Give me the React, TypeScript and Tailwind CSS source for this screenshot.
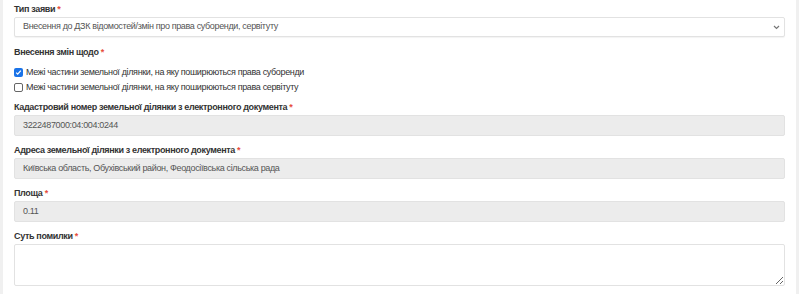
const font = { fontFamily: '"Liberation Sans", Arial, sans-serif' }

function Label({ text }: { text: string }) {
  return (
    <div className="h-[12px] text-[9px] font-bold leading-[12px] text-[#333]">
      {text} <span className="text-[#e74c3c]">*</span>
    </div>
  )
}

function ReadOnly({ value }: { value: string }) {
  return (
    <div className="mt-[2px] flex h-[21px] items-center rounded-[2px] border border-[#e2e2e2] bg-[#ececec] px-2 text-[9px] text-[#555]">
      {value}
    </div>
  )
}

export default function App() {
  return (
    <div className="flex h-[294px] w-[799px] bg-white tracking-[-0.35px]" style={font}>
      <div className="w-[3px] bg-[#f0f0f0]" />
      <div className="flex flex-1 flex-col pl-[11px] pr-[11px] pt-[3px]">
        <Label text="Тип заяви" />
        <div className="mt-[2px] flex h-[20px] items-center justify-between rounded-[2px] border border-[#e2e2e2] bg-white pl-2 pr-[4px] text-[9px] text-[#555] shadow-[0_1px_1px_rgba(0,0,0,0.05)]">
          <span>Внесення до ДЗК відомостей/змін про права суборенди, сервітуту</span>
          <svg width="7" height="5" viewBox="0 0 7 5" className="text-[#777]">
            <path d="M1 1l2.5 2.5L6 1" fill="none" stroke="currentColor" strokeWidth="1.2" />
          </svg>
        </div>

        <div className="mt-[9px]">
          <Label text="Внесення змін щодо" />
        </div>
        <div className="mt-[8px] flex flex-col gap-[3px] text-[9px] leading-[12px] text-[#333]">
          <label className="flex h-[12px] items-center gap-[3px]">
            <span className="flex h-[9px] w-[9px] items-center justify-center rounded-[2px] bg-[#1a73e8]">
              <svg width="7" height="7" viewBox="0 0 7 7">
                <path d="M1.2 3.6l1.5 1.5L5.8 1.6" fill="none" stroke="white" strokeWidth="1.3" />
              </svg>
            </span>
            Межі частини земельної ділянки, на яку поширюються права суборенди
          </label>
          <label className="flex h-[12px] items-center gap-[3px]">
            <span className="h-[9px] w-[9px] rounded-[2px] border border-[#666] bg-white" />
            Межі частини земельної ділянки, на яку поширюються права сервітуту
          </label>
        </div>

        <div className="mt-[8px] flex flex-col">
          <Label text="Кадастровий номер земельної ділянки з електронного документа" />
          <ReadOnly value="3222487000:04:004:0244" />
        </div>
        <div className="mt-[8px] flex flex-col">
          <Label text="Адреса земельної ділянки з електронного документа" />
          <ReadOnly value="Київська область, Обухівський район, Феодосіївська сільська рада" />
        </div>
        <div className="mt-[8px] flex flex-col">
          <Label text="Площа" />
          <ReadOnly value="0.11" />
        </div>
        <div className="mt-[8px] flex flex-col">
          <Label text="Суть помилки" />
          <textarea className="mt-[2px] block h-[42px] w-full rounded-[2px] border border-[#e2e2e2] bg-white px-2 text-[9px] outline-none" />
        </div>
      </div>
      <div className="w-[3px] bg-[#f0f0f0]" />
    </div>
  )
}
